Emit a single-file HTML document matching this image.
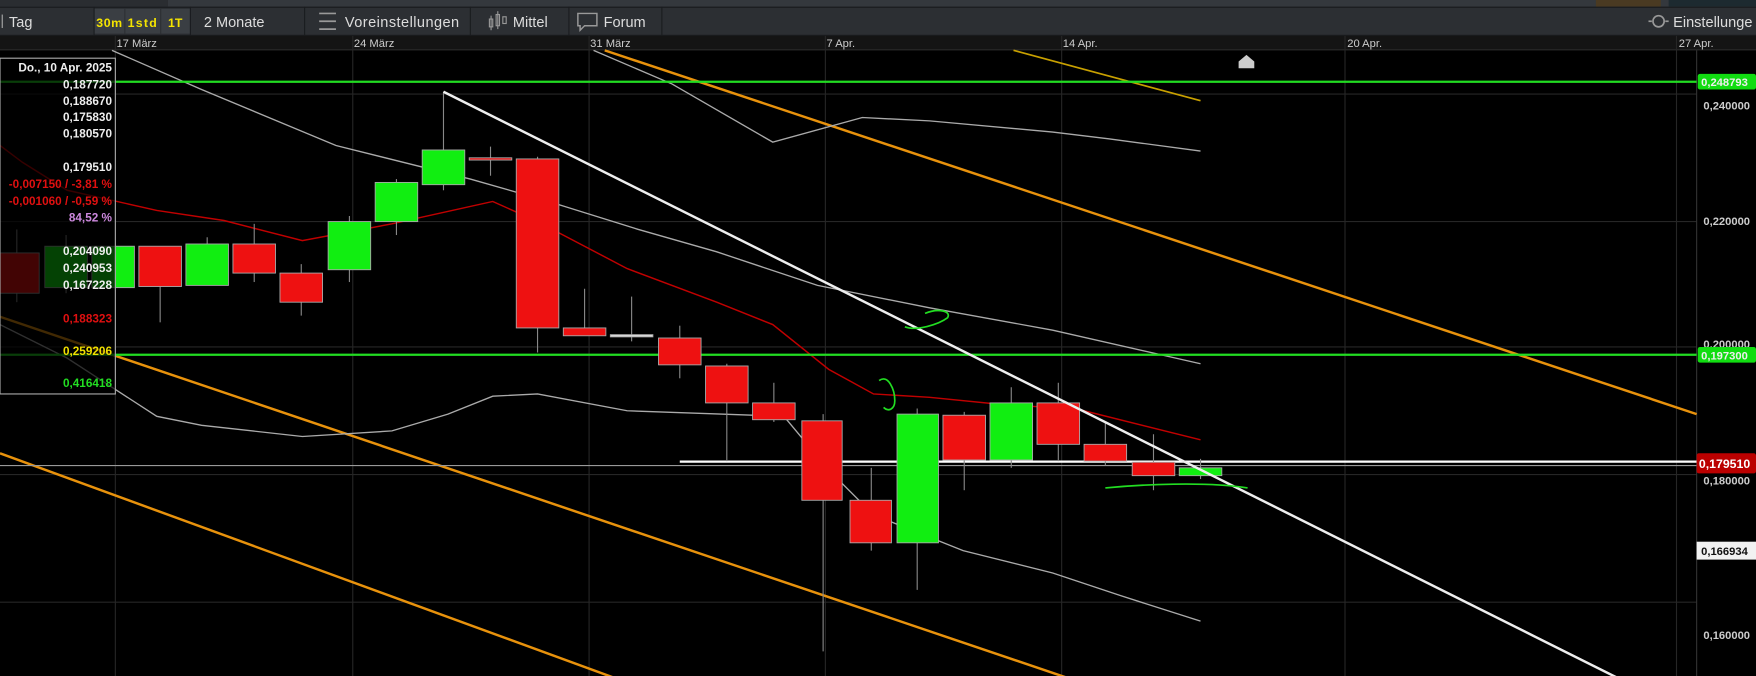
<!DOCTYPE html>
<html><head><meta charset="utf-8"><style>
html,body{margin:0;padding:0;background:#000;overflow:hidden}
svg{display:block}
text{font-family:"Liberation Sans",sans-serif}
</style></head><body>
<svg width="1756" height="676" viewBox="0 0 1568 604" preserveAspectRatio="none" xmlns="http://www.w3.org/2000/svg">
<rect width="1568" height="604" fill="#000"/>
<rect x="0" y="0" width="1568" height="6" fill="#34383d"/>
<rect x="0" y="0" width="150" height="6" fill="#2a2d31"/>
<rect x="1425" y="0" width="58" height="6" fill="#4a3a22"/>
<rect x="1490" y="0" width="78" height="6" fill="#1d2a30"/>
<rect x="0" y="6" width="1568" height="26" fill="#2c2f33"/>
<line x1="0" y1="6.5" x2="1568" y2="6.5" stroke="#1a1c1f"/>
<line x1="0" y1="31.5" x2="1568" y2="31.5" stroke="#1a1c1f"/>
<g fill="#3a3e43"><rect x="84" y="8" width="27" height="22"/><rect x="112" y="8" width="31" height="22"/><rect x="144" y="8" width="26" height="22"/></g>
<g stroke="#1a1c1f"><line x1="84" y1="6" x2="84" y2="32"/><line x1="170" y1="6" x2="170" y2="32"/><line x1="272" y1="6" x2="272" y2="32"/><line x1="420" y1="6" x2="420" y2="32"/><line x1="508" y1="6" x2="508" y2="32"/><line x1="591" y1="6" x2="591" y2="32"/></g>
<text x="8" y="24" font-size="13" fill="#ddd">Tag</text>
<line x1="2" y1="13" x2="2" y2="25" stroke="#aaa"/>
<text x="86" y="24" font-size="11" fill="#f5e400" font-weight="bold" textLength="23">30m</text>
<text x="114" y="24" font-size="11" fill="#f5e400" font-weight="bold" textLength="26">1std</text>
<text x="150" y="24" font-size="11" fill="#f5e400" font-weight="bold">1T</text>
<text x="182" y="24" font-size="13" fill="#ddd">2 Monate</text>
<g stroke="#999" stroke-width="1.5"><line x1="285" y1="12" x2="300" y2="12"/><line x1="285" y1="19" x2="300" y2="19"/><line x1="285" y1="26" x2="300" y2="26"/></g>
<text x="308" y="24" font-size="13" fill="#ddd" textLength="102">Voreinstellungen</text>
<g stroke="#999" fill="none"><rect x="437" y="17" width="3" height="7"/><rect x="443" y="13" width="3" height="10"/><rect x="449" y="15" width="3" height="6"/><line x1="438.5" y1="14" x2="438.5" y2="27"/><line x1="444.5" y1="10" x2="444.5" y2="26"/></g>
<text x="458" y="24" font-size="13" fill="#ddd">Mittel</text>
<path d="M516 12h17v11h-11l-4 4v-4h-2z" fill="none" stroke="#999" stroke-width="1.3"/>
<text x="539" y="24" font-size="13" fill="#ddd">Forum</text>
<circle cx="1481" cy="19" r="5" fill="none" stroke="#999" stroke-width="1.5"/>
<g stroke="#999" stroke-width="1.5"><line x1="1472" y1="19" x2="1475" y2="19"/><line x1="1487" y1="19" x2="1490" y2="19"/></g>
<text x="1494" y="24" font-size="13" fill="#ddd">Einstellunge</text>
<rect x="0" y="32" width="1568" height="13" fill="#141414"/>
<line x1="0" y1="44.5" x2="1568" y2="44.5" stroke="#2a2a2a"/>
<g font-size="10" fill="#ccc">
<text x="104" y="42">17 März</text><text x="316" y="42">24 März</text><text x="527" y="42">31 März</text>
<text x="738" y="42">7 Apr.</text><text x="949" y="42">14 Apr.</text><text x="1203" y="42">20 Apr.</text><text x="1499" y="42">27 Apr.</text></g>
<g stroke="#262626"><line x1="103" y1="32" x2="103" y2="604"/><line x1="315" y1="32" x2="315" y2="604"/><line x1="526" y1="32" x2="526" y2="604"/><line x1="737" y1="32" x2="737" y2="604"/><line x1="948" y1="32" x2="948" y2="604"/><line x1="1201" y1="32" x2="1201" y2="604"/><line x1="1497" y1="32" x2="1497" y2="604"/>
<line x1="0" y1="84" x2="1515" y2="84"/><line x1="0" y1="198" x2="1515" y2="198"/><line x1="0" y1="310" x2="1515" y2="310"/><line x1="0" y1="424" x2="1515" y2="424"/><line x1="0" y1="538" x2="1515" y2="538"/></g>
<line x1="1515" y1="45" x2="1515" y2="604" stroke="#333"/>
<g fill="none" stroke="#e8920c" stroke-width="2.2">
<line x1="540" y1="45" x2="1515" y2="370"/><line x1="0" y1="283" x2="960" y2="608"/><line x1="0" y1="405" x2="555" y2="608"/></g>
<line x1="905" y1="45" x2="1072" y2="90" stroke="#c8a000" stroke-width="1.5"/>
<g fill="none" stroke="#aaa" stroke-width="1.2">
<polyline points="100,45 180,80 300,130 420,160 490,180 570,205 640,225 730,255 830,275 940,295 1072,325"/>
<polyline points="530,45 600,75 690,127 770,105 830,108 940,118 990,124 1072,135"/>
<polyline points="0,290 60,320 140,372 180,380 270,390 350,385 400,370 440,354 480,352 560,367 700,372 740,420 780,460 860,492 940,512 1000,532 1072,555"/></g>
<polyline fill="none" stroke="#c00000" stroke-width="1.3" points="0,130 20,145 60,170 140,188 200,197 270,215 350,200 440,180 480,198 560,240 640,270 690,290 740,330 780,352 830,355 900,362 960,365 1072,393"/>
<line x1="0" y1="416" x2="1515" y2="416" stroke="#999"/>
<line x1="0" y1="73" x2="1515" y2="73" stroke="#22dd22" stroke-width="2"/>
<line x1="0" y1="317" x2="1515" y2="317" stroke="#22dd22" stroke-width="2"/>
<line x1="607" y1="412.5" x2="1515" y2="412.5" stroke="#fff" stroke-width="2"/>
<g stroke="#888" stroke-width="1">
<line x1="15" y1="205" x2="15" y2="270"/><line x1="59" y1="210" x2="59" y2="262"/><line x1="143" y1="220" x2="143" y2="288"/><line x1="185" y1="212" x2="185" y2="255"/><line x1="227" y1="200" x2="227" y2="252"/><line x1="269" y1="236" x2="269" y2="282"/><line x1="312" y1="193" x2="312" y2="252"/><line x1="354" y1="160" x2="354" y2="210"/><line x1="396" y1="82" x2="396" y2="170"/><line x1="438" y1="131" x2="438" y2="157"/><line x1="480" y1="140" x2="480" y2="315"/><line x1="522" y1="258" x2="522" y2="300"/><line x1="564" y1="265" x2="564" y2="305"/><line x1="607" y1="291" x2="607" y2="338"/><line x1="649" y1="325" x2="649" y2="412"/><line x1="691" y1="342" x2="691" y2="377"/><line x1="735" y1="370" x2="735" y2="582"/><line x1="778" y1="418" x2="778" y2="492"/><line x1="819" y1="365" x2="819" y2="527"/><line x1="861" y1="368" x2="861" y2="438"/><line x1="903" y1="346" x2="903" y2="418"/><line x1="945" y1="342" x2="945" y2="412"/><line x1="987" y1="378" x2="987" y2="416"/><line x1="1030" y1="388" x2="1030" y2="438"/><line x1="1072" y1="410" x2="1072" y2="428"/></g>
<g stroke="#aaa" stroke-width="0.8">
<rect x="-2" y="226" width="37" height="36" fill="#ee1111"/>
<rect x="40" y="220" width="38" height="37" fill="#11ee11"/>
<rect x="82" y="220" width="38" height="37" fill="#11ee11"/>
<rect x="124" y="220" width="38" height="36" fill="#ee1111"/>
<rect x="166" y="218" width="38" height="37" fill="#11ee11"/>
<rect x="208" y="218" width="38" height="26" fill="#ee1111"/>
<rect x="250" y="244" width="38" height="26" fill="#ee1111"/>
<rect x="293" y="198" width="38" height="43" fill="#11ee11"/>
<rect x="335" y="163" width="38" height="35" fill="#11ee11"/>
<rect x="377" y="134" width="38" height="31" fill="#11ee11"/>
<rect x="419" y="141" width="38" height="2" fill="#ee1111"/>
<rect x="461" y="142" width="38" height="151" fill="#ee1111"/>
<rect x="503" y="293" width="38" height="7" fill="#ee1111"/>
<rect x="545" y="299" width="38" height="2" fill="#ddd"/>
<rect x="588" y="302" width="38" height="24" fill="#ee1111"/>
<rect x="630" y="327" width="38" height="33" fill="#ee1111"/>
<rect x="672" y="360" width="38" height="15" fill="#ee1111"/>
<rect x="716" y="376" width="36" height="71" fill="#ee1111"/>
<rect x="759" y="447" width="37" height="38" fill="#ee1111"/>
<rect x="801" y="370" width="37" height="115" fill="#11ee11"/>
<rect x="842" y="371" width="38" height="40" fill="#ee1111"/>
<rect x="884" y="360" width="38" height="51" fill="#11ee11"/>
<rect x="926" y="360" width="38" height="37" fill="#ee1111"/>
<rect x="968" y="397" width="38" height="15" fill="#ee1111"/>
<rect x="1011" y="413" width="38" height="12" fill="#ee1111"/>
<rect x="1053" y="418" width="38" height="7" fill="#11ee11"/></g>
<line x1="396" y1="82" x2="1445" y2="606" stroke="#eee" stroke-width="2.2"/>
<g fill="none" stroke="#22dd22" stroke-width="1.5">
<path d="M808 292c10 4 30-2 38-8 4-6-8-9-20-4"/>
<path d="M785 340c8-6 14 8 14 18 0 8-6 10-10 6"/>
<path d="M987 436c30-3 90-6 127 0"/></g>
<path d="M1106 61v-6l7-6 7 6v6z" fill="#ccc"/>
<rect x="0" y="52" width="103" height="300" fill="#000" fill-opacity="0.72" stroke="#aaa" stroke-width="1"/>
<g font-size="10.5" font-weight="bold" text-anchor="end">
<text x="100" y="64" fill="#eee">Do., 10 Apr. 2025</text>
<text x="100" y="79" fill="#eee">0,187720</text><text x="100" y="94" fill="#eee">0,188670</text><text x="100" y="108" fill="#eee">0,175830</text><text x="100" y="123" fill="#eee">0,180570</text>
<text x="100" y="153" fill="#eee">0,179510</text>
<text x="100" y="168" fill="#e01010">-0,007150 / -3,81 %</text>
<text x="100" y="183" fill="#e01010">-0,001060 / -0,59 %</text>
<text x="100" y="198" fill="#cc88dd">84,52 %</text>
<text x="100" y="228" fill="#eee">0,204090</text><text x="100" y="243" fill="#eee">0,240953</text><text x="100" y="258" fill="#eee">0,167228</text>
<text x="100" y="288" fill="#e01010">0,188323</text>
<text x="100" y="317" fill="#f0e000">0,259206</text>
<text x="100" y="346" fill="#22dd22">0,416418</text></g>
<g font-size="10" fill="#ccc" font-weight="bold">
<text x="1521" y="98">0,240000</text><text x="1521" y="201">0,220000</text><text x="1521" y="311">0,200000</text><text x="1521" y="433">0,180000</text><text x="1521" y="571">0,160000</text></g>
<rect x="1516" y="66" width="52" height="14" rx="2" fill="#11dd11"/>
<text x="1519" y="77" font-size="10" font-weight="bold" fill="#eee">0,248793</text>
<rect x="1516" y="310" width="52" height="14" rx="2" fill="#11dd11"/>
<text x="1519" y="321" font-size="10" font-weight="bold" fill="#eee">0,197300</text>
<rect x="1515" y="405" width="53" height="18" rx="2" fill="#bb0000"/>
<text x="1517" y="418" font-size="11" font-weight="bold" fill="#fff">0,179510</text>
<rect x="1515" y="484" width="53" height="16" fill="#f2f2f2"/>
<text x="1519" y="496" font-size="10" font-weight="bold" fill="#111">0,166934</text>
</svg>
</body></html>
